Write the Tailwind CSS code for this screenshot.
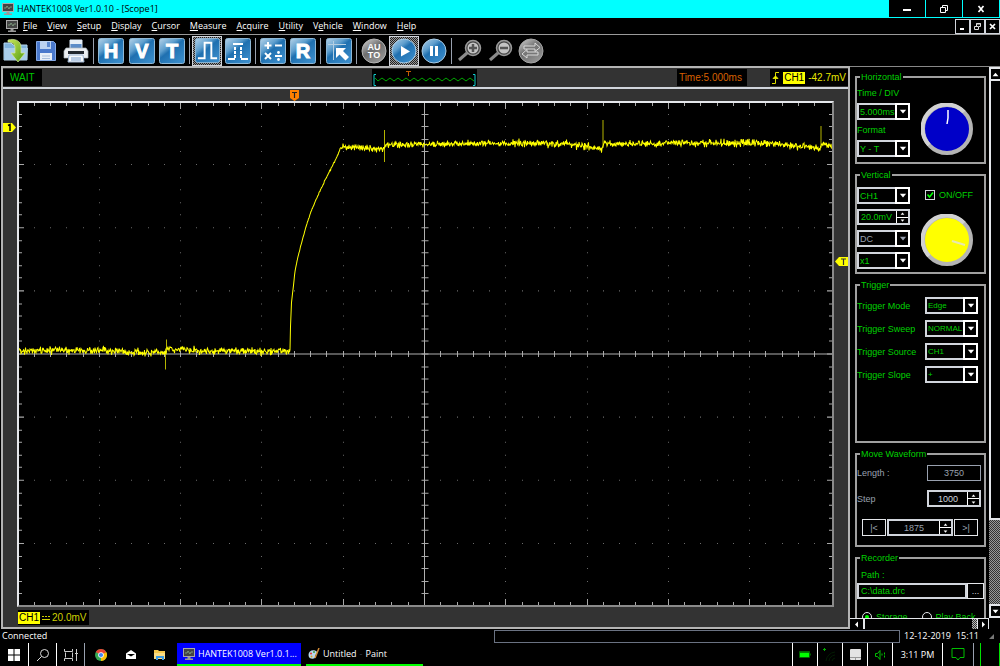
<!DOCTYPE html>
<html lang="en">
<head>
    <meta charset="UTF-8">
    <meta name="viewport" content="width=device-width, initial-scale=1.0">
    <title>HANTEK1008 Ver1.0.10 - [Scope1]</title>
    <script src="https://cdn.jsdelivr.net/npm/@tailwindcss/browser@4"></script>
</head>
<body class="h-screen flex flex-col overflow-hidden bg-black text-white text-[9px] leading-[10px] font-['Open_Sans','Noto_Sans',sans-serif]">

    <!-- Shared gradients and symbols -->
    <svg width="0" height="0" class="absolute" aria-hidden="true">
        <symbol id="monitor" viewBox="0 0 12 12">
            <rect x="0.5" y="0.5" width="11" height="8" fill="#444" stroke="#aaa"/>
            <path d="M2 5h2l1-2 2 3 1-2h2" fill="none" stroke="#8a8" stroke-width="0.8"/>
            <path d="M4.5 9h3v1.5H10V12H2v-1.5h2.500z" fill="#999"/>
        </symbol>
        <symbol id="down" viewBox="0 0 6 4"><path d="M0.500 0.500h5L3 3.500z" fill="currentColor"/></symbol>
        <defs>
            <linearGradient id="blue" x1="0" y1="0" x2="0.8" y2="1">
                <stop offset="0" stop-color="#b4d2e8"/>
                <stop offset="0.35" stop-color="#5f9fce"/>
                <stop offset="0.5" stop-color="#1f70b0"/>
                <stop offset="1" stop-color="#3b8dcb"/>
            </linearGradient>
            <linearGradient id="gray" x1="0" y1="0" x2="0.7" y2="1">
                <stop offset="0" stop-color="#d8d8d8"/>
                <stop offset="0.5" stop-color="#6d6d6d"/>
                <stop offset="1" stop-color="#969696"/>
            </linearGradient>
            <linearGradient id="green" x1="0" y1="0" x2="1" y2="1">
                <stop offset="0" stop-color="#cbe75a"/>
                <stop offset="1" stop-color="#4f9a10"/>
            </linearGradient>
        </defs>
    </svg>

    <!-- Title bar -->
    <header class="h-[18px] shrink-0 flex items-center bg-[#00ffff] text-black">
        <svg class="w-[12px] h-[12px] ml-[2px] mr-[3px]"><use href="#monitor"/></svg>
        <h1>HANTEK1008 Ver1.0.10 - [Scope1]</h1>
        <div class="ml-auto mr-px h-full flex gap-px pb-px">
            <button aria-label="Minimize" class="w-[36px] bg-black grid place-items-center"><svg width="10" height="10"><path d="M1 6h8" stroke="#fff" stroke-width="2"/></svg></button>
            <button aria-label="Restore" class="w-[36px] bg-black grid place-items-center"><svg width="10" height="10" fill="none" stroke="#fff"><path d="M1.500 3.500h5v5h-5zM3.500 3V1.500h5v5H7"/></svg></button>
            <button aria-label="Close" class="w-[36px] bg-black grid place-items-center"><svg width="10" height="10"><path d="M2.500 2l5 6M7.500 2l-5 6" stroke="#fff" stroke-width="1.700"/></svg></button>
        </div>
    </header>

    <!-- Menu bar -->
    <nav class="h-[17px] shrink-0 flex items-center border-b border-[#9a9a9a]">
        <svg class="w-[12px] h-[12px] ml-[6px] mr-[5px]"><use href="#monitor"/></svg>
        <div class="flex gap-[10px]">
            <a href="#"><u>F</u>ile</a>
            <a href="#"><u>V</u>iew</a>
            <a href="#"><u>S</u>etup</a>
            <a href="#"><u>D</u>isplay</a>
            <a href="#"><u>C</u>ursor</a>
            <a href="#"><u>M</u>easure</a>
            <a href="#"><u>A</u>cquire</a>
            <a href="#"><u>U</u>tility</a>
            <a href="#">V<u>e</u>hicle</a>
            <a href="#"><u>W</u>indow</a>
            <a href="#"><u>H</u>elp</a>
        </div>
        <div class="ml-auto h-[15px] flex">
            <button aria-label="Minimize scope" class="w-[15px] border border-gray-300 grid place-items-center"><svg width="9" height="9"><path d="M2 7h4" stroke="#fff" stroke-width="2"/></svg></button>
            <button aria-label="Restore scope" class="w-[15px] border border-gray-300 grid place-items-center"><svg width="9" height="9" fill="none" stroke="#ddd"><path d="M1.500 4.500h4v3h-4zM3.500 4V1.500h4v3H6M3 2h5"/></svg></button>
            <button aria-label="Close scope" class="w-[15px] border border-gray-300 grid place-items-center"><svg width="9" height="9"><path d="M2 2l5 5M7 2l-5 5" stroke="#fff" stroke-width="1.700"/></svg></button>
        </div>
    </nav>

    <!-- Toolbar -->
    <div class="h-[31px] shrink-0 flex items-center pl-px font-['Liberation_Sans',sans-serif]">
        <button aria-label="Open" class="w-[30px] h-[30px] grid place-items-center">
            <svg width="26" height="26" viewBox="0 0 26 26">
                <path d="M1 5h7l2 2h14v15H1z" fill="#7fb2dc" stroke="#b9d8ee"/>
                <path d="M1 10h24l-1 12H2z" fill="#a9cdea"/>
                <path d="M5 2c7-2 13 1 13 7v6h4l-7 9-7-9h4V10c0-4-3-6-7-6z" fill="url(#green)" stroke="#d6eaa0" stroke-width="0.700"/>
            </svg>
        </button>
        <button aria-label="Save" class="w-[30px] h-[30px] grid place-items-center">
            <svg width="22" height="22" viewBox="0 0 22 22">
                <path d="M1.500 1.500h17l2 2v17h-19z" fill="#4a79cc" stroke="#86a9e4"/>
                <path d="M5 1h11v8H5z" fill="#bcd2f0"/><path d="M12 2h3v5h-3z" fill="#5b88cf"/>
                <path d="M5 13h12v7H5z" fill="#e8eff8"/><path d="M7 16h8M7 18.500h8" stroke="#a9bfdc"/>
            </svg>
        </button>
        <button aria-label="Print" class="w-[30px] h-[30px] grid place-items-center">
            <svg width="26" height="26" viewBox="0 0 26 26">
                <path d="M7 2h12v9H7z" fill="#5c8cc8" stroke="#d5e3f2"/><path d="M7 2h12v4H7z" fill="#e6eef6"/>
                <path d="M3 10h20l2 3v7H1v-7z" fill="#eceef1" stroke="#aeb4bc" stroke-width="0.700"/>
                <path d="M5 13h16v3H5z" fill="#23282f"/>
                <path d="M6 17h14l1 7H5z" fill="#f8fafc" stroke="#9fb6d4"/><path d="M8 20h10M8 22h10" stroke="#7ea1d0"/>
            </svg>
        </button>
        <span class="w-px mx-[2px] h-[26px] bg-gray-400"></span>
        <button aria-label="Horizontal" class="w-[30px] h-[30px] grid place-items-center">
            <svg width="26" height="26" viewBox="0 0 26 26"><rect x="0.500" y="0.500" width="25" height="25" rx="2" fill="url(#blue)" stroke="#8fb8d6"/><text x="13" y="20" text-anchor="middle" font-size="20" font-weight="700" fill="#fff" stroke="#fff">H</text></svg>
        </button>
        <button aria-label="Vertical" class="w-[31px] h-[30px] grid place-items-center">
            <svg width="26" height="26" viewBox="0 0 26 26"><rect x="0.500" y="0.500" width="25" height="25" rx="2" fill="url(#blue)" stroke="#8fb8d6"/><text x="13" y="20" text-anchor="middle" font-size="20" font-weight="700" fill="#fff" stroke="#fff">V</text></svg>
        </button>
        <button aria-label="Trigger" class="w-[30px] h-[30px] grid place-items-center">
            <svg width="26" height="26" viewBox="0 0 26 26"><rect x="0.500" y="0.500" width="25" height="25" rx="2" fill="url(#blue)" stroke="#8fb8d6"/><text x="13" y="20" text-anchor="middle" font-size="20" font-weight="700" fill="#fff" stroke="#fff">T</text></svg>
        </button>
        <span class="w-px mx-[2px] h-[26px] bg-gray-400"></span>
        <button aria-label="Pulse" class="w-[30px] h-[30px] grid place-items-center border border-gray-300 bg-[repeating-conic-gradient(#222_0_25%,#999_0_50%)] bg-[length:2px_2px]">
            <svg width="25" height="25" viewBox="0 0 26 26"><rect x="0.500" y="0.500" width="25" height="25" rx="2" fill="url(#blue)" stroke="#8fb8d6"/><path d="M3 21h7V5h7v16h6" fill="none" stroke="#fff" stroke-width="2"/></svg>
        </button>
        <button aria-label="Dotted pulse" class="w-[31px] h-[30px] grid place-items-center">
            <svg width="26" height="26" viewBox="0 0 26 26"><rect x="0.500" y="0.500" width="25" height="25" rx="2" fill="url(#blue)" stroke="#8fb8d6"/><path d="M3 21h7M16 21h7M8 6h10" fill="none" stroke="#fff" stroke-width="2"/><path d="M10 9v11M16 9v11" stroke="#fff" stroke-width="2" stroke-dasharray="3 1"/></svg>
        </button>
        <span class="w-px mx-[2px] h-[26px] bg-gray-400"></span>
        <button aria-label="Math" class="w-[30px] h-[30px] grid place-items-center">
            <svg width="26" height="26" viewBox="0 0 26 26"><rect x="0.500" y="0.500" width="25" height="25" rx="2" fill="url(#blue)" stroke="#8fb8d6"/><path d="M8 4v7M4.500 7.500h7M15 7.500h7M5 15l6 6M11 15l-6 6M15 18h7" stroke="#fff" stroke-width="2"/><circle cx="18.500" cy="14.500" r="1.400" fill="#fff"/><circle cx="18.500" cy="21.500" r="1.400" fill="#fff"/></svg>
        </button>
        <button aria-label="Reference" class="w-[30px] h-[30px] grid place-items-center">
            <svg width="26" height="26" viewBox="0 0 26 26"><rect x="0.500" y="0.500" width="25" height="25" rx="2" fill="url(#blue)" stroke="#8fb8d6"/><text x="13" y="20" text-anchor="middle" font-size="20" font-weight="700" fill="#fff" stroke="#fff">R</text></svg>
        </button>
        <span class="w-px mx-[2px] h-[26px] bg-gray-400"></span>
        <button aria-label="Cursor" class="w-[31px] h-[30px] grid place-items-center">
            <svg width="26" height="26" viewBox="0 0 26 26"><rect x="0.500" y="0.500" width="25" height="25" rx="2" fill="url(#blue)" stroke="#8fb8d6"/><path d="M2 6.500h18M7.500 3v19" stroke="#b4cfe2"/><path d="M10 10h10l-3 3 6 6-3.500 3.500-6-6-3.500 3.500z" fill="#fff"/></svg>
        </button>
        <span class="w-px mx-[2px] h-[26px] bg-gray-400"></span>
        <button aria-label="Auto" class="w-[30px] h-[30px] grid place-items-center">
            <svg width="26" height="26" viewBox="0 0 26 26"><circle cx="13" cy="13" r="12" fill="url(#gray)" stroke="#b5b5b5"/><text x="13" y="12" text-anchor="middle" font-size="9" font-weight="700" fill="#fff">AU</text><text x="13" y="20" text-anchor="middle" font-size="9" font-weight="700" fill="#fff">TO</text></svg>
        </button>
        <button aria-label="Run" class="w-[30px] h-[30px] grid place-items-center border border-gray-300 bg-[repeating-conic-gradient(#222_0_25%,#999_0_50%)] bg-[length:2px_2px]">
            <svg width="26" height="26" viewBox="0 0 26 26"><circle cx="13" cy="13" r="12" fill="url(#blue)" stroke="#a9cbe4"/><path d="M10 8l9 5.500-9 5z" fill="#fff"/></svg>
        </button>
        <button aria-label="Pause" class="w-[30px] h-[30px] grid place-items-center">
            <svg width="26" height="26" viewBox="0 0 26 26"><circle cx="13" cy="13" r="12" fill="url(#blue)" stroke="#a9cbe4"/><path d="M10.500 8v10M15.500 8v10" stroke="#fff" stroke-width="3"/></svg>
        </button>
        <span class="w-px mx-[2px] h-[26px] bg-gray-400"></span>
        <button aria-label="Zoom in" class="w-[31px] h-[30px] grid place-items-center">
            <svg width="26" height="26" viewBox="0 0 26 26"><path d="M2 22L10 15" stroke="#8a8a8a" stroke-width="3"/><circle cx="16" cy="10" r="7.500" fill="#444" stroke="#9a9a9a" stroke-width="1.500"/><circle cx="16" cy="10" r="5.500" fill="#c4c4c4"/><path d="M16 6v8M12 10h8" stroke="#555" stroke-width="2.500"/></svg>
        </button>
        <button aria-label="Zoom out" class="w-[31px] h-[30px] grid place-items-center">
            <svg width="26" height="26" viewBox="0 0 26 26"><path d="M2 22L10 15" stroke="#8a8a8a" stroke-width="3"/><circle cx="16" cy="10" r="7.500" fill="#444" stroke="#9a9a9a" stroke-width="1.500"/><circle cx="16" cy="10" r="5.500" fill="#c4c4c4"/><path d="M12 10h8" stroke="#555" stroke-width="2.500"/></svg>
        </button>
        <button aria-label="Swap" class="w-[30px] h-[30px] grid place-items-center">
            <svg width="26" height="26" viewBox="0 0 26 26"><circle cx="13" cy="13" r="12" fill="url(#gray)" stroke="#a5a5a5"/><path d="M6 10V8h11V5l5 4.500-5 4V11H6zM20 15v2H9v3l-5-4 5-4.500V14h11z" fill="#777" stroke="#dcdcdc"/></svg>
        </button>
    </div>

    <main class="flex-1 min-h-0 flex font-['Liberation_Sans',sans-serif]">

        <!-- Scope view -->
        <section class="flex-1 min-w-0 flex flex-col bg-[#333] ml-px border-2 border-[#b4b4b4] text-[10px] leading-[12px]">
            <div class="h-[21px] shrink-0 flex items-start pt-px border-b-2 border-gray-300">
                <div class="w-[39px] h-[17px] bg-black text-[#00c800] flex items-center pl-[7px]">WAIT</div>
                <div class="grow-[329]"></div>
                <svg class="bg-black" width="105" height="17" viewBox="0 0 105 17">
                    <path d="M4 5.500H2v11h2M101 5.500h2v11h-2" fill="none" stroke="#1cc"/>
                    <path id="preview" fill="none" stroke="#00a800"/>
                    <path d="M34 2.500h5M36.500 2v5" stroke="#c25a00"/>
                </svg>
                <div class="grow-[199]"></div>
                <div class="w-[70px] h-[17px] bg-black text-[#d86000] flex items-center pl-[2px]">Time:5.000ms</div>
                <div class="grow-[23]"></div>
                <div class="w-[78px] h-[17px] bg-black text-[#e8e800] flex items-center justify-end gap-[3px] pr-[2px]">
                    <svg width="9" height="14" viewBox="0 0 9 14" fill="none" stroke="#dd0"><path d="M1 12.500h3.500v-11H8"/><path d="M2 7.500h5L4.500 5z" fill="#ff0"/></svg>
                    <span class="bg-[#ffff00] text-black px-px">CH1</span>
                    <span>-42.7mV</span>
                </div>
            </div>

            <div class="relative flex-1 min-h-0 flex flex-col px-[14px] pt-[12px]">
                <svg id="plot" class="block w-full flex-1 min-h-0 bg-black border-2 border-t-gray-200 border-l-gray-200 border-r-[#8a8a8a] border-b-[#8a8a8a]" viewBox="0 0 813 501" preserveAspectRatio="none">
                    <path id="dots" fill="none" stroke="#6a6a6a"/>
                    <path id="ticks" fill="none" stroke="#a8a8a8"/>
                    <path d="M405.500 0V501M0 250.500H813" stroke="#b0b0b0"/>
                    <path id="spikes" fill="none" stroke="#b4b400"/>
                    <path id="trace" fill="none" stroke="#ffff00"/>
                </svg>
                <div class="h-[20px] shrink-0 pt-[3px] pl-px">
                    <div class="w-[71px] h-[15px] bg-black text-[#d0d000] flex items-center gap-[2px]">
                        <span class="bg-[#ffff00] text-black px-px">CH1</span>
                        <svg width="8" height="6"><path d="M0 4.500h8" stroke="#cc0"/><path d="M0 1.500h8" stroke="#cc0" stroke-dasharray="2 1"/></svg>
                        <span>20.0mV</span>
                    </div>
                </div>

                <!-- Level and trigger markers -->
                <svg class="absolute left-0 top-[34px]" width="13" height="9" viewBox="0 0 13 9"><path d="M0 0h9l4 4.500L9 9H0z" fill="#ff0"/><path d="M5 2.500l2-1V8" fill="none" stroke="#000" stroke-width="1.500"/></svg>
                <svg class="absolute left-[34%] top-px" width="9" height="11" viewBox="0 0 9 11"><path d="M0 0h9v8l-4.500 3L0 8z" fill="#ff8000"/><path d="M2 2.500h5M4.500 2.500V8" stroke="#222" stroke-width="1.200"/></svg>
                <svg class="absolute right-0 top-[168px]" width="13" height="9" viewBox="0 0 13 9"><path d="M13 0H4L0 4.500 4 9h9z" fill="#ff0"/><path d="M6 2h5M8.500 2v6" stroke="#333" stroke-width="1.200"/></svg>
            </div>
        </section>

        <!-- Control panel -->
        <aside class="w-[150px] shrink-0 flex border-t border-[#888] text-[#00d000]">
            <div class="flex-1 min-w-0 flex flex-col">
                <form class="flex-1 min-h-0 overflow-hidden flex flex-col gap-[6px] pt-[5px] pl-[5px] pr-[3px]">
                    <fieldset class="h-[92px] shrink-0 border-2 border-[#a0a0a0]">
                        <legend class="ml-[3px] px-px">Horizontal</legend>
                        <div class="flex pt-[6px]">
                            <div class="w-[53px] flex flex-col gap-[5px]">
                                <label for="timeDiv">Time / DIV</label>
                                <div class="relative h-[17px]">
                                    <select id="timeDiv" class="appearance-none block w-full h-full border-2 border-gray-300 bg-black pl-px"><option>5.000ms</option></select>
                                    <span class="absolute right-0 top-0 w-[15px] h-full border-2 border-white bg-black text-white grid place-items-center pointer-events-none"><svg width="8" height="5"><use href="#down"/></svg></span>
                                </div>
                                <label for="format">Format</label>
                                <div class="relative h-[17px]">
                                    <select id="format" class="appearance-none block w-full h-full border-2 border-gray-300 bg-black pl-px"><option>Y - T</option></select>
                                    <span class="absolute right-0 top-0 w-[15px] h-full border-2 border-white bg-black text-white grid place-items-center pointer-events-none"><svg width="8" height="5"><use href="#down"/></svg></span>
                                </div>
                            </div>
                            <svg class="ml-[11px] mt-[15px]" width="52" height="52" viewBox="0 0 52 52"><circle cx="26" cy="26" r="24" fill="#0000c8" stroke="#b4b4b4" stroke-width="4"/><path d="M8 42A24 24 0 0 1 43 9" fill="none" stroke="#d2d2d2" stroke-width="4"/><path d="M27 7v8l-1 6" fill="none" stroke="#fff" stroke-width="1.500"/></svg>
                        </div>
                    </fieldset>

                    <fieldset class="h-[104px] shrink-0 border-2 border-[#a0a0a0]">
                        <legend class="ml-[3px] px-px">Vertical</legend>
                        <div class="flex pt-[7px]">
                            <div class="w-[53px] flex flex-col gap-[5px]">
                                <div class="relative h-[17px]">
                                    <select aria-label="Channel" class="appearance-none block w-full h-full border-2 border-gray-300 bg-black pl-px"><option>CH1</option></select>
                                    <span class="absolute right-0 top-0 w-[15px] h-full border-2 border-white bg-black text-white grid place-items-center pointer-events-none"><svg width="8" height="5"><use href="#down"/></svg></span>
                                </div>
                                <div class="h-[16px] flex border-2 border-gray-300">
                                    <input aria-label="Volts per division" value="20.0mV" class="w-0 flex-1 bg-black pl-[2px]">
                                    <div class="w-[12px] flex flex-col text-white bg-white gap-px pl-px">
                                        <button type="button" aria-label="Increase volts" class="flex-1 bg-black grid place-items-center"><svg class="rotate-180" width="5" height="3"><use href="#down"/></svg></button>
                                        <button type="button" aria-label="Decrease volts" class="flex-1 bg-black grid place-items-center"><svg width="5" height="3"><use href="#down"/></svg></button>
                                    </div>
                                </div>
                                <div class="relative h-[17px]">
                                    <select aria-label="Coupling" class="appearance-none block w-full h-full border-2 border-gray-300 bg-black pl-px text-gray-400"><option>DC</option></select>
                                    <span class="absolute right-0 top-0 w-[15px] h-full border-2 border-white bg-black text-gray-400 grid place-items-center pointer-events-none"><svg width="8" height="5"><use href="#down"/></svg></span>
                                </div>
                                <div class="relative h-[17px]">
                                    <select aria-label="Probe" class="appearance-none block w-full h-full border-2 border-gray-300 bg-black pl-px"><option>x1</option></select>
                                    <span class="absolute right-0 top-0 w-[15px] h-full border-2 border-white bg-black text-white grid place-items-center pointer-events-none"><svg width="8" height="5"><use href="#down"/></svg></span>
                                </div>
                            </div>
                            <div class="ml-[11px] pt-[3px] flex flex-col gap-[14px]">
                                <label class="flex items-center gap-[4px] pl-[4px]">
                                    <span class="grid w-[10px] h-[10px]">
                                        <input type="checkbox" checked class="appearance-none col-start-1 row-start-1 border border-gray-300 bg-black">
                                        <svg class="col-start-1 row-start-1 pointer-events-none" width="10" height="10"><path d="M2.500 4.500l2 2.500 3.500-4.500" fill="none" stroke="#0f0" stroke-width="1.600"/></svg>
                                    </span>
                                    ON/OFF
                                </label>
                                <svg width="52" height="52" viewBox="0 0 52 52"><circle cx="26" cy="26" r="24" fill="#ffff00" stroke="#b4b4b4" stroke-width="4"/><path d="M8 42A24 24 0 0 1 43 9" fill="none" stroke="#d2d2d2" stroke-width="4"/><path d="M31 27l13 4" stroke="#e8e8b0" stroke-width="2"/></svg>
                            </div>
                        </div>
                    </fieldset>

                    <fieldset class="h-[163px] shrink-0 border-2 border-[#a0a0a0]">
                        <legend class="ml-[3px] px-px">Trigger</legend>
                        <div class="grid grid-cols-[68px_53px] gap-y-[6px] items-center pt-[7px]">
                            <label for="trigMode">Trigger Mode</label>
                            <div class="relative h-[17px]">
                                <select id="trigMode" class="appearance-none block w-full h-full border-2 border-gray-300 bg-black pl-px text-[8px]"><option>Edge</option></select>
                                <span class="absolute right-0 top-0 w-[15px] h-full border-2 border-white bg-black text-white grid place-items-center pointer-events-none"><svg width="8" height="5"><use href="#down"/></svg></span>
                            </div>
                            <label for="trigSweep">Trigger Sweep</label>
                            <div class="relative h-[17px]">
                                <select id="trigSweep" class="appearance-none block w-full h-full border-2 border-gray-300 bg-black pl-px text-[8px]"><option>NORMAL</option></select>
                                <span class="absolute right-0 top-0 w-[15px] h-full border-2 border-white bg-black text-white grid place-items-center pointer-events-none"><svg width="8" height="5"><use href="#down"/></svg></span>
                            </div>
                            <label for="trigSource">Trigger Source</label>
                            <div class="relative h-[17px]">
                                <select id="trigSource" class="appearance-none block w-full h-full border-2 border-gray-300 bg-black pl-px text-[8px]"><option>CH1</option></select>
                                <span class="absolute right-0 top-0 w-[15px] h-full border-2 border-white bg-black text-white grid place-items-center pointer-events-none"><svg width="8" height="5"><use href="#down"/></svg></span>
                            </div>
                            <label for="trigSlope">Trigger Slope</label>
                            <div class="relative h-[17px]">
                                <select id="trigSlope" class="appearance-none block w-full h-full border-2 border-gray-300 bg-black pl-px text-[8px]"><option>+</option></select>
                                <span class="absolute right-0 top-0 w-[15px] h-full border-2 border-white bg-black text-white grid place-items-center pointer-events-none"><svg width="8" height="5"><use href="#down"/></svg></span>
                            </div>
                        </div>
                    </fieldset>

                    <fieldset class="h-[98px] shrink-0 border-2 border-[#a0a0a0] text-gray-400">
                        <legend class="ml-[3px] px-px text-[#00d000]">Move Waveform</legend>
                        <div class="flex items-center justify-between pt-[6px] pr-[3px]">
                            <label for="length">Length :</label>
                            <input id="length" value="3750" class="w-[54px] h-[16px] bg-black border border-gray-400 text-center">
                        </div>
                        <div class="flex items-center justify-between pt-[9px] pr-[3px]">
                            <label for="step">Step</label>
                            <div class="w-[54px] h-[17px] flex border-2 border-gray-300">
                                <input id="step" value="1000" class="w-0 flex-1 bg-black text-center text-gray-300">
                                <div class="w-[12px] flex flex-col text-white bg-white gap-px pl-px">
                                    <button type="button" aria-label="Increase step" class="flex-1 bg-black grid place-items-center"><svg class="rotate-180" width="5" height="3"><use href="#down"/></svg></button>
                                    <button type="button" aria-label="Decrease step" class="flex-1 bg-black grid place-items-center"><svg width="5" height="3"><use href="#down"/></svg></button>
                                </div>
                            </div>
                        </div>
                        <div class="flex gap-px h-[29px] pt-[12px] pl-[5px]">
                            <button type="button" class="w-[24px] border border-gray-200">|&lt;</button>
                            <div class="w-[66px] flex border-2 border-gray-300">
                                <input aria-label="Position" value="1875" class="w-0 flex-1 bg-black text-center">
                                <div class="w-[12px] flex flex-col text-white bg-white gap-px pl-px">
                                    <button type="button" aria-label="Increase position" class="flex-1 bg-black grid place-items-center"><svg class="rotate-180" width="5" height="3"><use href="#down"/></svg></button>
                                    <button type="button" aria-label="Decrease position" class="flex-1 bg-black grid place-items-center"><svg width="5" height="3"><use href="#down"/></svg></button>
                                </div>
                            </div>
                            <button type="button" class="w-[24px] border border-gray-200">&gt;|</button>
                        </div>
                    </fieldset>

                    <fieldset class="h-[98px] shrink-0 border-2 border-[#a0a0a0]">
                        <legend class="ml-[3px] px-px">Recorder</legend>
                        <label for="path" class="block pl-[4px] pt-[7px] pb-[3px]">Path :</label>
                        <div class="h-[16px] flex">
                            <input id="path" value="C:\data.drc" class="w-0 flex-1 bg-black border-2 border-gray-300 pl-[2px]">
                            <button type="button" class="w-[17px] border border-gray-200 text-gray-300">...</button>
                        </div>
                        <div class="flex pt-[13px] pl-[5px] gap-[14px]">
                            <label class="flex items-center gap-[4px]">
                                <span class="grid w-[10px] h-[10px]">
                                    <input type="radio" name="rec" checked class="appearance-none col-start-1 row-start-1 rounded-full border border-gray-200 bg-black">
                                    <svg class="col-start-1 row-start-1 pointer-events-none" width="10" height="10"><circle cx="5" cy="5" r="2" fill="#0f0"/></svg>
                                </span>
                                Storage
                            </label>
                            <label class="flex items-center gap-[4px]"><input type="radio" name="rec" class="appearance-none w-[10px] h-[10px] rounded-full border border-gray-200 bg-black">Play Back</label>
                        </div>
                    </fieldset>
                </form>

                <!-- Horizontal scrollbar -->
                <div class="h-[11px] shrink-0 flex border-t border-gray-200">
                    <button aria-label="Scroll left" class="w-[13px] grid place-items-center"><svg width="5" height="7"><path d="M4 0.500v6L1 3.500z" fill="#fff"/></svg></button>
                    <div class="flex-1 border-l-2 border-gray-200"></div>
                    <div class="w-[5px] bg-[repeating-conic-gradient(#333_0_25%,#bbb_0_50%)] bg-[length:2px_2px]"></div>
                    <button aria-label="Scroll right" class="w-[12px] border-x border-gray-200 grid place-items-center"><svg width="5" height="7"><path d="M1 0.500v6l3-3z" fill="#fff"/></svg></button>
                </div>
            </div>

            <!-- Vertical scrollbar -->
            <div class="w-[11px] flex flex-col pb-[11px]">
                <button aria-label="Scroll up" class="h-[14px] border-2 border-r-0 border-gray-200 text-white grid place-items-center"><svg class="rotate-180" width="7" height="5"><use href="#down"/></svg></button>
                <div class="grow-[440] border-l-2 border-b-2 border-gray-200"></div>
                <div class="grow-[84] bg-[repeating-conic-gradient(#333_0_25%,#999_0_50%)] bg-[length:2px_2px]"></div>
                <button aria-label="Scroll down" class="h-[14px] border-2 border-r-0 border-gray-200 text-white grid place-items-center"><svg width="7" height="5"><use href="#down"/></svg></button>
            </div>
        </aside>
    </main>

    <!-- Status bar -->
    <footer class="h-[14px] shrink-0 flex items-center pl-[2px]">
        <span class="w-[492px]">Connected</span>
        <span class="flex-1 h-[13px] border border-gray-500"></span>
        <span class="w-[100px] pl-[4px] flex items-center gap-[5px]"><span>12-12-2019</span><span>15:11</span><svg class="ml-auto mr-[6px]" width="5" height="6"><path d="M0 6l5-5v5z" fill="#777"/></svg></span>
    </footer>

    <!-- Taskbar -->
    <div class="h-[23px] shrink-0 flex">
        <button aria-label="Start" class="w-[29px] border-r border-white grid place-items-center"><svg width="12" height="12" fill="#fff"><path d="M0 0h5.500v5.500H0zM6.500 0H12v5.500H6.500zM0 6.500h5.500V12H0zM6.500 6.500H12V12H6.500z"/></svg></button>
        <button aria-label="Search" class="w-[28px] border-r border-white grid place-items-center"><svg width="14" height="14" fill="none" stroke="#ddd"><circle cx="8.500" cy="5.500" r="4"/><path d="M5.500 8.500L1 13"/></svg></button>
        <button aria-label="Task view" class="w-[28px] border-r border-gray-400 grid place-items-center"><svg width="14" height="12" fill="none" stroke="#ccc"><path d="M0.500 0v2.500h8V0M0.500 12V9.500h8V12M1.500 3.500v5M8.500 3.500v5M12.500 0v12M11 4.500h3"/></svg></button>
        <button aria-label="Chrome" class="w-[31px] grid place-items-center">
            <svg width="12" height="12" viewBox="0 0 12 12"><circle cx="6" cy="6" r="6" fill="#34a853"/><path d="M6 6L0.800 3A6 6 0 0 1 11.200 3z" fill="#ea4335"/><path d="M6 6l5.200-3A6 6 0 0 1 6 12z" fill="#fbbc05"/><path d="M6 3h5.200L6 6z" fill="#ea4335"/><circle cx="6" cy="6" r="2.800" fill="#fff"/><circle cx="6" cy="6" r="2.100" fill="#4285f4"/></svg>
        </button>
        <button aria-label="Mail" class="w-[29px] grid place-items-center"><svg width="10" height="9"><path d="M0 3.500L5 0l5 3.500V9H0z" fill="#fff"/><path d="M1 4h8L5 6.500z" fill="#000"/></svg></button>
        <button aria-label="Explorer" class="w-[30px] grid place-items-center"><svg width="12" height="11"><path d="M0 1h4l1 1h6v8H0z" fill="#f5c84c"/><path d="M0 4h11v6H0z" fill="#fbdc83"/><path d="M2 7h8v4H8V9H4v2H2z" fill="#3d9be0"/></svg></button>
        <button class="ml-[2px] w-[124px] h-full bg-[#0000ff] border-b-2 border-[#00ff00] flex items-center gap-[3px] pl-[6px] whitespace-nowrap"><svg width="12" height="12"><use href="#monitor"/></svg>HANTEK1008 Ver1.0.1...</button>
        <button class="ml-[5px] w-[117px] h-full border-b-2 border-[#00ff00] flex items-center gap-[3px] pl-[2px] whitespace-nowrap">
            <svg width="12" height="12" viewBox="0 0 12 12"><path d="M0.500 7C0.500 3 4 1.500 7 2.500s3 3 1 4 1 2-1 3.500-6.500 1-6.500-3z" fill="#b8d8ec"/><circle cx="3" cy="5.500" r="1.100" fill="#e04040"/><circle cx="6" cy="4" r="1" fill="#40a040"/><circle cx="3.500" cy="8.500" r="1" fill="#e0a020"/><path d="M11 0L7 10" stroke="#d28a35" stroke-width="1.500"/></svg>
            <span>Untitled</span><span class="text-gray-700">-</span><span>Paint</span>
        </button>

        <div class="ml-auto flex">
            <button aria-label="Battery" class="w-[25px] border-l border-white grid place-items-center"><svg width="13" height="8"><path d="M0.500 0.500h10v6h-10zM11.500 2.500v2" fill="none" stroke="#060"/><path d="M1 1.500h9v4.500H1z" fill="#0f0"/></svg></button>
            <button aria-label="Network" class="w-[25px] border-l border-white grid place-items-center"><svg width="14" height="14" fill="none" stroke="#031c03"><path d="M3 13a10 10 0 0 1 9-9M6 13a7 7 0 0 1 6-6M9 13a4 4 0 0 1 3-3"/><path d="M1.500 0v3M0 1.500h3" stroke="#0a0"/></svg></button>
            <button aria-label="Touchpad" class="w-[25px] border-l border-white grid place-items-center"><svg width="11" height="11"><rect width="11" height="11" rx="1" fill="#e4e4e4"/><path d="M0 8.500h11M5.500 8.500V11" stroke="#999"/></svg></button>
            <button aria-label="Volume" class="w-[25px] border-l border-white grid place-items-center"><svg width="11" height="10" fill="none" stroke="#00c000"><path d="M0.500 3.500h2l2.500-3v9l-2.500-3h-2z"/><path d="M7 3.500v3M9.500 2.500v5" stroke-dasharray="2 1"/></svg></button>
            <button class="w-[50px] border-l border-white">3:11 PM</button>
            <button aria-label="Notifications" class="w-[31px] border-l border-white grid place-items-center"><svg width="14" height="13"><path d="M1 0.500h12v9H9L7 12 5 9.500H1z" fill="none" stroke="#00c000"/></svg></button>
            <div class="w-[7px] border-l border-gray-400"></div>
            <button aria-label="Show desktop" class="w-[20px] border-x border-[#00e000]"></button>
        </div>
    </div>

    <script>
    const W = 813, H = 501, CX = 405.5, CY = 250.5;
    const snap = v => Math.round(v - 0.5) + 0.5;

    // Graticule: 10 x 8 divisions, 5 minor ticks each
    let dots = '', ticks = '';
    for (let i = -24; i <= 24; i++) {
        const x = snap(CX + i * 16.26);
        const len = i % 5 === 0 ? 6 : 3;
        ticks += `M${x} 0v${len}M${x} ${H}v${-len}M${x} ${CY - 3}v6`;
        for (let r = -3; r <= 3; r++) {
            if (r !== 0) dots += `M${x - 0.5} ${snap(CY + r * 63)}h1`;
        }
    }
    for (let j = -19; j <= 19; j++) {
        const y = snap(CY + j * 12.6);
        const len = j % 5 === 0 ? 5 : 3;
        ticks += `M0 ${y}h${len}M${W} ${y}h${-len}M${CX - 3} ${y}h7`;
        for (let c = -4; c <= 4; c++) {
            if (c !== 0) dots += `M${snap(CX + c * 81.3) - 0.5} ${y}h1`;
        }
    }
    document.getElementById('dots').setAttribute('d', dots);
    document.getElementById('ticks').setAttribute('d', ticks);

    // Record preview in the header
    let preview = 'M3 9';
    for (let x = 6, up = false; x <= 102; x += 4, up = !up) {
        preview += `L${x} ${up ? 9 : 12}`;
    }
    document.getElementById('preview').setAttribute('d', preview);

    // Small fixed-seed generator so the noise is the same on every load
    let seed = 1008;
    function rand() {
        seed = (seed * 16807) % 2147483647;
        return seed / 2147483647;
    }

    // Waveform: each point is [x, y, noise]
    const points = [
        [0, 247, 2], [80, 247, 2], [120, 249, 2], [146, 249, 2], [148, 246, 2], [180, 247, 2], [271, 248, 2],
        [271.5, 223, 0], [272.5, 199, 0], [274, 186, 0.3], [276, 168, 0.3], [279, 153, 0.3], [283, 138, 0.3],
        [288, 120, 0.4], [293, 106, 0.4], [299, 92, 0.5], [305, 79, 0.5], [310, 69, 0.6], [316, 58, 0.6], [321, 46, 0.6],
        [324, 44, 1.7], [340, 44, 1.7], [364, 46, 1.7], [367, 42, 1.7], [405, 41, 1.7], [480, 40, 2], [545, 41, 2],
        [571, 44, 1.5], [583, 46, 1.2], [585, 41, 1.5], [660, 40, 2], [740, 40, 2], [780, 43, 1.7], [801, 46, 1.2],
        [803, 40, 1.5], [813, 43, 1.7]
    ];
    let trace = '';
    for (let k = 0; k < points.length - 1; k++) {
        const [x0, y0, n] = points[k];
        const [x1, y1] = points[k + 1];
        const steps = Math.max(1, Math.round((x1 - x0) * 2));
        for (let s = 0; s < steps; s++) {
            const t = s / steps;
            const noise = (rand() + rand() + rand() - 1.5) * n * 1.8;
            trace += `${trace ? 'L' : 'M'}${(x0 + (x1 - x0) * t).toFixed(1)} ${(y0 + (y1 - y0) * t + noise).toFixed(1)}`;
        }
    }
    document.getElementById('trace').setAttribute('d', trace);
    document.getElementById('spikes').setAttribute('d', 'M146.5 266V245M147.5 236v10M365.500 27v32M584 17v28M802 23v22');
    </script>
</body>
</html>
